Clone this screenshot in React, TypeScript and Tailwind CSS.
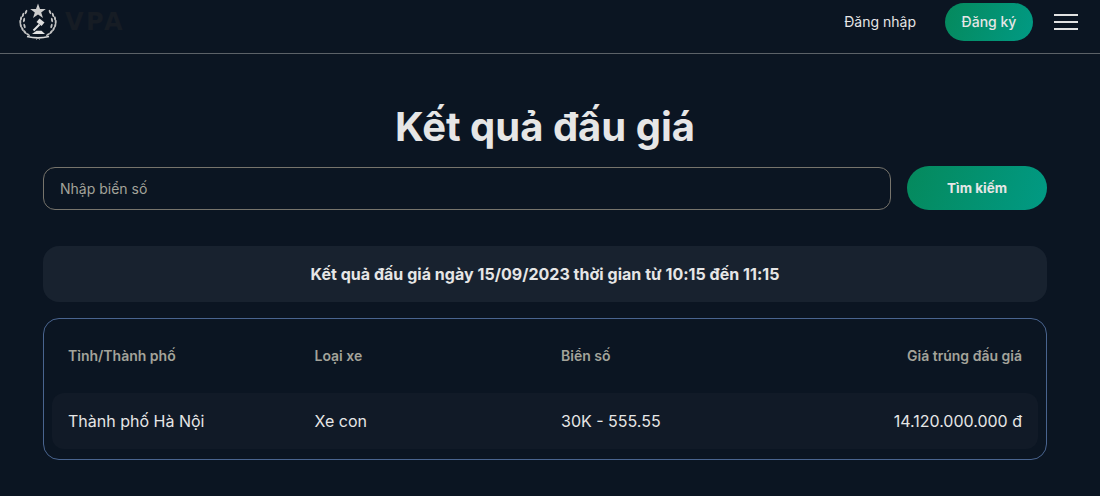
import React from "react";

const rows = [
    {city: "Thành phố Hà Nội", type: "Xe con", plate: "30K - 555.55", price: "14.120.000.000 đ"},
];

// leaves of the laurel, left side only, the right side is a mirror of it
const leaves = [
    {x: 8, y: 10, r: 25},
    {x: 5, y: 13, r: 18},
    {x: 3, y: 16.5, r: 8},
    {x: 2.3, y: 20, r: -3},
    {x: 2.8, y: 23.5, r: -14},
    {x: 4.4, y: 27, r: -26},
    {x: 6.8, y: 30, r: -40},
    {x: 10, y: 32.5, r: -56},
    {x: 6, y: 18, r: 12},
    {x: 6.5, y: 24, r: -15},
];

function Logo() {
    return (
        <div className="flex items-center">
            <svg width="40" height="40" viewBox="0 0 40 40" fill="none">
                <path d="M20 1.5 L22 7 L27.8 7 L23.2 10.4 L25 16 L20 12.6 L15 16 L16.8 10.4 L12.2 7 L18 7 Z" fill="#cdcdcd" />
                {leaves.map((leaf, index) => {
                    return (
                        <g key={index}>
                            <ellipse cx={leaf.x} cy={leaf.y} rx="1" ry="2.3" transform={`rotate(${leaf.r} ${leaf.x} ${leaf.y})`} fill="#c2c2c2" />
                            <ellipse cx={40 - leaf.x} cy={leaf.y} rx="1" ry="2.3" transform={`rotate(${-leaf.r} ${40 - leaf.x} ${leaf.y})`} fill="#c2c2c2" />
                        </g>
                    );
                })}
                <path d="M21.5 16.5 L26.5 20.5 L23.5 24 L18.5 20 Z" fill="#dedede" />
                <path d="M21.5 22.5 L15.5 28.5" stroke="#e2e2e2" strokeWidth="2" />
                <path d="M14 32 L18.5 28.8 L23.5 28.8 L27 32 Z" fill="#e2e2e2" />
                <path d="M9 34.5 C16 36.2 24 36.2 31 34.5" stroke="#d8d8d8" strokeWidth="1.6" />
                <path d="M18 37.5 L20 36 L22 37.5" stroke="#a8a8a8" strokeWidth="1" />
            </svg>
            <span className="ml-[7px] font-['DejaVu_Sans',sans-serif] text-[24px] leading-none font-bold tracking-[2.5px] text-[#161c24]">VPA</span>
        </div>
    );
}

export default function App() {
    return (
        <div className={"min-h-[496px] bg-[#0b1522] text-[#e6e6e6] font-['Inter',sans-serif] overflow-hidden"}>
            <header className="h-[54px] flex items-center justify-between pl-[18px] pr-[22px] pb-[9px] border-b border-[#5c6268]">
                <Logo />
                <div className="flex items-center">
                    <span className="text-sm mr-[29px]">Đăng nhập</span>
                    <button className="h-[38px] w-[88px] rounded-full text-sm font-medium bg-[linear-gradient(110deg,#05895c,#019a84)] mr-[21px]">Đăng ký</button>
                    <div className="w-[24px] flex flex-col gap-[5px]">
                        <div className="h-[2px] bg-[#e2e2e2]"></div>
                        <div className="h-[2px] bg-[#e2e2e2]"></div>
                        <div className="h-[2px] bg-[#e2e2e2]"></div>
                    </div>
                </div>
            </header>
            <main className="pl-[43px] pr-[53px]">
                <h1 className="text-[40px] leading-[48px] font-bold text-center mt-[49px]">Kết quả đấu giá</h1>
                <div className="flex items-center gap-4 mt-[15px]">
                    <input
                        className="flex-1 h-[43px] rounded-xl border border-[#77746c] bg-transparent px-4 text-sm placeholder:text-[#a3a39a] outline-none"
                        placeholder="Nhập biển số"
                    />
                    <button className="w-[140px] h-[44px] rounded-full text-[13.5px] font-bold bg-[linear-gradient(110deg,#05895c,#019a84)]">Tìm kiếm</button>
                </div>
                <div className="mt-9 h-14 rounded-2xl bg-[#18222f] flex items-center justify-center text-base font-bold tracking-[0.03px]">
                    Kết quả đấu giá ngày 15/09/2023 thời gian từ 10:15 đến 11:15
                </div>
                <div className="mt-4 rounded-2xl border border-[#49648f] px-2 pb-[10px]">
                    <div className="grid grid-cols-[246.5px_246.5px_1fr_1fr] items-center h-[74px] px-4 text-sm font-semibold text-[#a3a39a]">
                        <span>Tỉnh/Thành phố</span>
                        <span>Loại xe</span>
                        <span>Biển số</span>
                        <span className="text-right">Giá trúng đấu giá</span>
                    </div>
                    {rows.map((row, index) => {
                        return (
                            <div key={index} className="grid grid-cols-[246.5px_246.5px_1fr_1fr] items-center h-14 px-4 rounded-xl bg-[#111a27] text-base">
                                <span>{row.city}</span>
                                <span>{row.type}</span>
                                <span>{row.plate}</span>
                                <span className="text-right">{row.price}</span>
                            </div>
                        )
                    })}
                </div>
            </main>
        </div>
    );
}
